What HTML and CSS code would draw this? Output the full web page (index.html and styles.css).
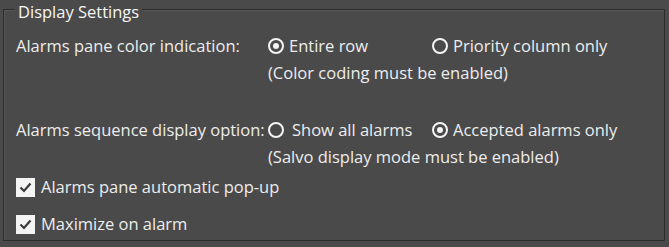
FILE: index.html
```html
<!DOCTYPE html>
<html>
<head>
<meta charset="utf-8">
<link rel="stylesheet" href="styles.css">
</head>
<body>
<div class="panel">
  <div class="group">
    <div class="legend">Display Settings</div>
    <div class="grid">
      <div class="label">Alarms pane color indication:</div>
      <div class="opt"><span class="radio checked"></span><span>Entire row</span></div>
      <div class="opt"><span class="radio"></span><span>Priority column only</span></div>
      <div class="note">(Color coding must be enabled)</div>

      <div class="label gap">Alarms sequence display option:</div>
      <div class="opt gap wide"><span class="radio"></span><span>Show all alarms</span></div>
      <div class="opt gap"><span class="radio checked"></span><span>Accepted alarms only</span></div>
      <div class="note">(Salvo display mode must be enabled)</div>
    </div>
    <div class="check first"><span class="box"><svg width="19" height="19" viewBox="0 0 19 19"><path d="M4.5 9.5 L8 13 L14.5 5.5" fill="none" stroke="#3a3a3a" stroke-width="2.2"/></svg></span><span>Alarms pane automatic pop-up</span></div>
    <div class="check second"><span class="box"><svg width="19" height="19" viewBox="0 0 19 19"><path d="M4.5 9.5 L8 13 L14.5 5.5" fill="none" stroke="#3a3a3a" stroke-width="2.2"/></svg></span><span>Maximize on alarm</span></div>
  </div>
</div>
</body>
</html>
```

FILE: styles.css
```css
html, body {
  margin: 0;
  padding: 0;
  background: #4a4a4a;
}
body {
  width: 669px;
  height: 247px;
  overflow: hidden;
  font-family: "Open Sans", "Noto Sans", sans-serif;
  font-size: 16.5px;
  color: #ededed;
}
.panel {
  padding: 9px 4px 0 3px;
}
.group {
  border: 1px solid #2c2c2c;
  box-shadow: inset 1px 1px 0 #575757;
  height: 232px;
  box-sizing: border-box;
  padding: 0 0 0 12px;
}
.legend {
  display: block;
  width: max-content;
  margin-top: -8px;
  margin-left: -1px;
  padding: 0 3px;
  background: #4a4a4a;
  color: #f6f6f6;
  line-height: 20px;
}
.grid {
  display: grid;
  grid-template-columns: 252px 164px auto;
  margin-top: 13px;
  line-height: 22px;
}
.label {
  grid-column: 1;
  white-space: nowrap;
}
.opt {
  display: flex;
  align-items: center;
  gap: 5px;
  white-space: nowrap;
}
.opt.wide {
  gap: 8px;
}
.note {
  grid-column: 2 / 4;
  margin-top: 5px;
}
.gap {
  margin-top: 35px;
}
.radio {
  width: 12px;
  height: 12px;
  border: 2px solid #f4f4f4;
  border-radius: 50%;
  box-sizing: content-box;
  position: relative;
  flex: none;
}
.radio.checked::after {
  content: "";
  position: absolute;
  left: 3px;
  top: 3px;
  width: 6px;
  height: 6px;
  border-radius: 50%;
  background: #f4f4f4;
}
.check {
  display: flex;
  align-items: center;
  gap: 6px;
  line-height: 22px;
}
.check.first { margin-top: 8px; }
.check.second { margin-top: 15px; }
.box {
  width: 19px;
  height: 19px;
  background: #f4f4f4;
  flex: none;
  display: block;
}
.box svg { display: block; }
```
